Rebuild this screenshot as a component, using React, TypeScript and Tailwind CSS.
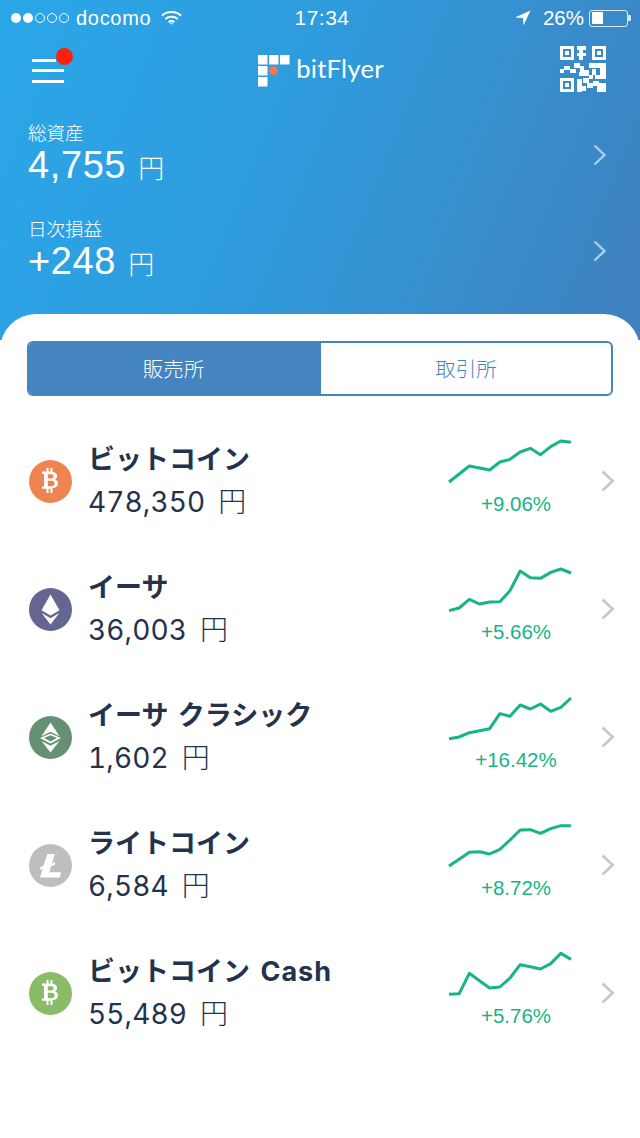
import React from "react";

const jp = "font-['Inter','Noto_Sans_CJK_JP',sans-serif]";

const qrCells = [
    // top left finder
    "0,0,5,1.1", "0,3.9,5,1.1", "0,1,1.1,3", "3.9,1,1.1,3", "1.7,1.7,1.6,1.6",
    // top right finder
    "11,0,5,1.1", "11,3.9,5,1.1", "11,1,1.1,3", "14.9,1,1.1,3", "12.7,1.7,1.6,1.6",
    // bottom left finder
    "0,11,5,1.1", "0,14.9,5,1.1", "0,12,1.1,3", "3.9,12,1.1,3", "1.7,12.7,1.6,1.6",
    // data
    "6,0,3,1.3", "6.5,1.3,1.5,1.2", "6,2.5,3,1", "6.5,3.5,1.5,1.5",
    "0,8,1.5,1.5", "1.5,7,2,1.5", "3.5,8,2,1.5", "5,6,2,1.5", "7,7,1.5,2",
    "6.5,9,2,1.5", "8.5,8.5,1.5,2", "10,6,6,1.5", "14,7.5,2,3", "11,8,1.5,2",
    "10,10,1.5,1.5", "12,10,4,1.5", "6,11.5,1.5,4.5", "8,11,2,2", "9.5,13,2,1.5",
    "7.5,14,1.5,1.5", "11.5,12,2,2", "13,13,3,3",
];

const rows = [
    {
        name: "ビットコイン",
        price: "478,350",
        change: "+9.06%",
        coin: "btc",
        line: [156, 132, 108, 114, 120, 96, 88, 66, 55, 74, 50, 33, 37],
    },
    {
        name: "イーサ",
        price: "36,003",
        change: "+5.66%",
        coin: "eth",
        line: [158, 150, 124, 138, 132, 131, 98, 39, 59, 61, 43, 33, 45],
    },
    {
        name: "イーサ クラシック",
        price: "1,602",
        change: "+16.42%",
        coin: "etc",
        line: [158, 153, 140, 134, 128, 83, 91, 57, 69, 54, 76, 64, 36],
    },
    {
        name: "ライトコイン",
        price: "6,584",
        change: "+8.72%",
        coin: "ltc",
        line: [156, 136, 115, 113, 120, 106, 78, 48, 47, 58, 44, 35, 35],
    },
    {
        name: "ビットコイン",
        suffix: "Cash",
        price: "55,489",
        change: "+5.76%",
        coin: "bch",
        line: [157, 155, 94, 116, 138, 135, 108, 68, 74, 81, 65, 34, 52],
    },
];

const BitcoinMark = () => (
    <path
        fillRule="evenodd"
        fill="#fff"
        d="M17.5 8h2v3.6h2V8h2v3.8c3 .5 4.6 1.9 4.6 4.3 0 1.6-.8 2.8-2.2 3.4 2 .6 3 1.9 3 3.9 0 2.9-2 4.4-5.4 4.7V33h-2v-4.2h-2V33h-2v-4.2H13v-2.4h2V14h-2v-2.400h4.500zM18.800 14.200v4.300h3.400c1.500 0 2.400-.8 2.400-2.150s-.9-2.150-2.400-2.150zM18.800 20.700v5.500h4c1.800 0 2.800-1 2.800-2.750s-1-2.750-2.800-2.750z"
    />
);

const CoinIcon = ({ coin }: { coin: string }) => {
    const fill: Record<string, string> = {
        btc: "#ee8450",
        eth: "#646591",
        etc: "#669073",
        ltc: "#bebebe",
        bch: "#88bc67",
    };
    return (
        <svg width="43" height="43" viewBox="0 0 43 43" className="shrink-0">
            <circle cx="21.5" cy="21.5" r="21.5" fill={fill[coin]} />
            {(coin === "btc" || coin === "bch") && <BitcoinMark />}
            {coin === "eth" && (
                <g fill="#fff">
                    <path d="M21.5 6.500 30.500 22.300 21.500 27.500 12.500 22.300z" />
                    <path d="M12.700 25 21.500 30.200 30.300 25 21.500 36.500z" />
                </g>
            )}
            {coin === "etc" && (
                <g fill="#fff">
                    <path d="M21.500 6.500 30.500 20.300 21.500 15.800 12.500 20.300z" />
                    <path d="M21.500 17.500 32 22 21.500 27.500 11 22zM21.500 19.300 15 22 21.500 25.400 28 22z" fillRule="evenodd" />
                    <path d="M12.500 25 21.500 29.800 30.500 25 21.500 36.500z" />
                </g>
            )}
            {coin === "ltc" && (
                <path
                    fill="#fff"
                    d="M18.500 10h7.300l-2.800 9.300 3.400-1.400-.8 3-3.500 1.400-1.700 6h11.600l-1.300 5.200H11l2.600-8.800-2.900 1.100.7-2.800 3-1.200z"
                />
            )}
        </svg>
    );
};

const Chevron = ({ color, width = 2.4 }: { color: string; width?: number }) => (
    <svg width="14" height="22" viewBox="0 0 14 22" fill="none" className="shrink-0">
        <path d="M1.5 1.500 11.500 11 1.500 20.500" stroke={color} strokeWidth={width} />
    </svg>
);

const Sparkline = ({ line }: { line: number[] }) => {
    const points = line.map((y, i) => `${58 + i * 30.5},${y}`).join(" ");
    return (
        <svg width="124" height="60" viewBox="55 0 372 180" fill="none">
            <polyline points={points} stroke="#15b585" strokeWidth="9" strokeLinejoin="round" />
        </svg>
    );
};

const Summary = ({ label, value }: { label: string; value: string }) => (
    <div className="h-[96px] flex items-center justify-between pl-[28px] pr-[33px] text-white">
        <div>
            <p className={`${jp} text-[18.5px] leading-[22px] font-light`}>{label}</p>
            <p className="font-['Liberation_Sans','Noto_Sans_CJK_JP',sans-serif] text-[38px] leading-[42px] tracking-[0.6px]">
                {value} <span className="text-[26px] font-['Noto_Sans_CJK_JP',sans-serif] font-light ml-[1px]">円</span>
            </p>
        </div>
        <Chevron color="#a9cfe9" />
    </div>
);

const App = () => {
    return (
        <div className="w-[640px] h-[1138px] bg-white overflow-hidden">
            {/* blue header */}
            <div className="h-[340px] bg-[linear-gradient(112deg,#2aa7e9_0%,#2f9bdc_45%,#4080bd_100%)]">
                {/* status bar */}
                <div className="h-[36px] flex items-center justify-between pl-[11px] pr-[9px] text-white font-['Liberation_Sans',sans-serif]">
                    <div className="flex items-center w-[240px]">
                        <div className="flex gap-[2px]">
                            <span className="w-[10px] h-[10px] rounded-full bg-white" />
                            <span className="w-[10px] h-[10px] rounded-full bg-white" />
                            <span className="w-[10px] h-[10px] rounded-full border border-white" />
                            <span className="w-[10px] h-[10px] rounded-full border border-white" />
                            <span className="w-[10px] h-[10px] rounded-full border border-white" />
                        </div>
                        <span className="ml-[7px] tracking-[0.7px] text-[20px]">docomo</span>
                        <svg width="21" height="16" viewBox="0 0 22 16" fill="none" stroke="#fff" strokeWidth="2.2" className="ml-[10px]">
                            <path d="M1 5.500C6.500 .5 15.500 .5 21 5.500" />
                            <path d="M4.500 9C8 6 14 6 17.500 9" />
                            <path d="M8 12.300C9.800 10.900 12.200 10.900 14 12.300" />
                            <path d="M9.500 13.300 11 15l1.500-1.700c-.9-.6-2.100-.6-3 0z" fill="#fff" stroke="none" />
                        </svg>
                    </div>
                    <span className="text-[21px] tracking-[0.5px] ml-[2px]">17:34</span>
                    <div className="flex items-center justify-end w-[240px]">
                        <svg width="16" height="16" viewBox="0 0 16 16" fill="#fff">
                            <path d="M15.500.5 0 7.500l8 .6.5 7.400z" />
                        </svg>
                        <span className="ml-[12px] text-[20.5px]">26%</span>
                        <div className="ml-[5px] w-[39px] h-[17px] rounded-[3px] border border-white/80 p-[1.5px]">
                            <div className="w-[11px] h-full bg-white rounded-[1px]" />
                        </div>
                        <span className="w-[3px] h-[6px] bg-white/80 rounded-r-[1px]" />
                    </div>
                </div>

                {/* menu, logo, qr */}
                <div className="h-[64px] flex items-center justify-between pl-[32px] pr-[34px]">
                    <div className="relative w-[32px] h-[24px] flex flex-col justify-between mt-[5px]">
                        <span className="h-[3px] w-[24px] bg-white" />
                        <span className="h-[3px] bg-white" />
                        <span className="h-[3px] bg-white" />
                        <span className="absolute -top-[11px] left-[24px] w-[17px] h-[17px] rounded-full bg-[#f9210c]" />
                    </div>
                    <div className="flex items-center ml-[18px] mt-[2px]">
                        <svg width="32" height="32" viewBox="0 0 32 32" className="mt-[4px]">
                            <g fill="#fff">
                                <rect x="0" y="0" width="9.5" height="9.5" />
                                <rect x="11" y="0" width="9.5" height="9.5" />
                                <rect x="22" y="0" width="9.5" height="9.5" />
                                <rect x="0" y="11" width="9.5" height="9.5" />
                                <rect x="0" y="22" width="9.5" height="9.5" />
                            </g>
                            <circle cx="15.5" cy="15.8" r="4.5" fill="#ea7a52" />
                        </svg>
                        <span className="ml-[6px] font-['Lato',sans-serif] text-[25.5px] leading-none text-white tracking-[0.3px]">bitFlyer</span>
                    </div>
                    <svg width="46" height="46" viewBox="0 0 16 16" fill="#fff" shapeRendering="crispEdges" className="mt-[1px]">
                        {qrCells.map((cell) => {
                            const [x, y, w, h] = cell.split(",").map(Number);
                            return <rect key={cell} x={x} y={y} width={w} height={h} />;
                        })}
                    </svg>
                </div>

                <div className="mt-[7px]">
                    <Summary label="総資産" value="4,755" />
                    <Summary label="日次損益" value="+248" />
                </div>
            </div>

            {/* white sheet */}
            <div className="-mt-[26px] relative bg-white rounded-t-[36px] px-[27px] pt-[27px]">
                <div className="h-[55px] flex rounded-[6px] border-2 border-[#4484bf] overflow-hidden font-['Noto_Sans_CJK_JP',sans-serif] text-[20.5px] font-light">
                    <div className="w-[292px] bg-[#4484bf] text-white flex items-center justify-center pr-[3px]">販売所</div>
                    <div className="flex-1 text-[#4484bf] flex items-center justify-center">取引所</div>
                </div>

                <div className="-mx-[27px] mt-[21px]">
                    {rows.map((row) => (
                        <div key={row.price} className="h-[128px] flex items-center pl-[29px] pr-[25px]">
                            <CoinIcon coin={row.coin} />
                            <div className="ml-[16px] w-[360px] text-[#24324c] font-['Inter','Noto_Sans_CJK_JP',sans-serif] -mt-[1px]">
                                <p className="text-[27px] leading-[42px] font-bold whitespace-nowrap [word-spacing:3px]">
                                    {row.name}
                                    {row.suffix && <span className="tracking-[1px]"> {row.suffix}</span>}
                                </p>
                                <p className="text-[28px] leading-[42px] tracking-[0.1px] tabular-nums -mt-[2px]">
                                    {row.price} <span className="font-['Noto_Sans_CJK_JP',sans-serif] font-light ml-[5.5px]">円</span>
                                </p>
                            </div>
                            <div className="w-[124px] flex flex-col items-center -mt-[17px]">
                                <Sparkline line={row.line} />
                                <p className="font-['Liberation_Sans',sans-serif] text-[20.5px] leading-[24px] text-[#15b585] mt-[2px] ml-[12px]">{row.change}</p>
                            </div>
                            <div className="ml-auto">
                                <Chevron color="#c8c8cd" width={2.8} />
                            </div>
                        </div>
                    ))}
                </div>
            </div>
        </div>
    );
};

export default App;
